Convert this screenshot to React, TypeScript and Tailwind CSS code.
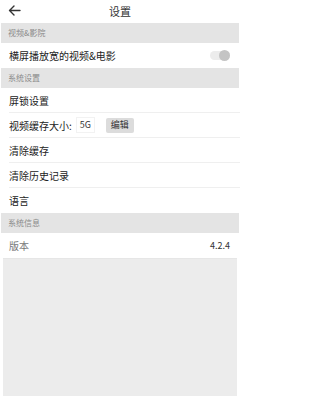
const font = { fontFamily: '"Noto Sans CJK SC", "Noto Sans", sans-serif' };

function Band({ title }: { title: string }) {
  return (
    <div className="mx-px flex h-[20px] items-center bg-[#e4e4e4] pl-[7px] text-[8px] text-[#8a8a8a]">
      {title}
    </div>
  );
}

function Row({ children, last }: { children: React.ReactNode; last?: boolean }) {
  return (
    <div className="pl-[9px]">
      <div
        className={`flex h-[25px] items-center pr-[10px] text-[10px] text-[#222] ${last ? "" : "border-b border-[#efefef]"}`}
      >
        {children}
      </div>
    </div>
  );
}

export default function App() {
  return (
    <div className="flex h-[400px] w-[240px] flex-col bg-white" style={font}>
      {/* top bar */}
      <div className="relative flex h-[23px] items-center justify-center">
        <svg
          className="absolute left-[8px] top-[5px]"
          width="13"
          height="11"
          viewBox="0 0 13 11"
          fill="none"
          stroke="#333"
          strokeWidth="1.4"
          strokeLinecap="round"
          strokeLinejoin="round"
        >
          <path d="M12 5.5H1.5M6 1L1.5 5.5 6 10" />
        </svg>
        <span className="text-[11px] text-[#333]">设置</span>
      </div>

      <Band title="视频&影院" />
      <Row last>
        <span className="flex-1">横屏播放宽的视频&电影</span>
        <div className="relative h-[9px] w-[20px] rounded-full bg-[#ececec]">
          <div className="absolute right-0 top-[-1px] h-[11px] w-[11px] rounded-full bg-[#c4c4c4]" />
        </div>
      </Row>

      <Band title="系统设置" />
      <Row>屏锁设置</Row>
      <Row>
        <span>视频缓存大小:</span>
        <span className="ml-[4px] flex h-[16px] w-[19px] items-center justify-center border border-[#f2f2f2] text-[9px] text-[#333]">
          5G
        </span>
        <span className="ml-[11px] flex h-[15px] w-[28px] items-center justify-center rounded-[2px] bg-[#dcdcdc] text-[9px] text-[#333]">
          编辑
        </span>
      </Row>
      <Row>清除缓存</Row>
      <Row>清除历史记录</Row>
      <Row last>语言</Row>

      <Band title="系统信息" />
      <div className="flex h-[25px] items-center justify-between pl-[9px] pr-[10px] text-[10px]">
        <span className="text-[#777]">版本</span>
        <span className="text-[9px] text-[#333]">4.2.4</span>
      </div>

      <div className="mx-[3px] mb-[4px] flex-1 border-t border-[#e6e6e6] bg-[#ececec]" />
    </div>
  );
}
